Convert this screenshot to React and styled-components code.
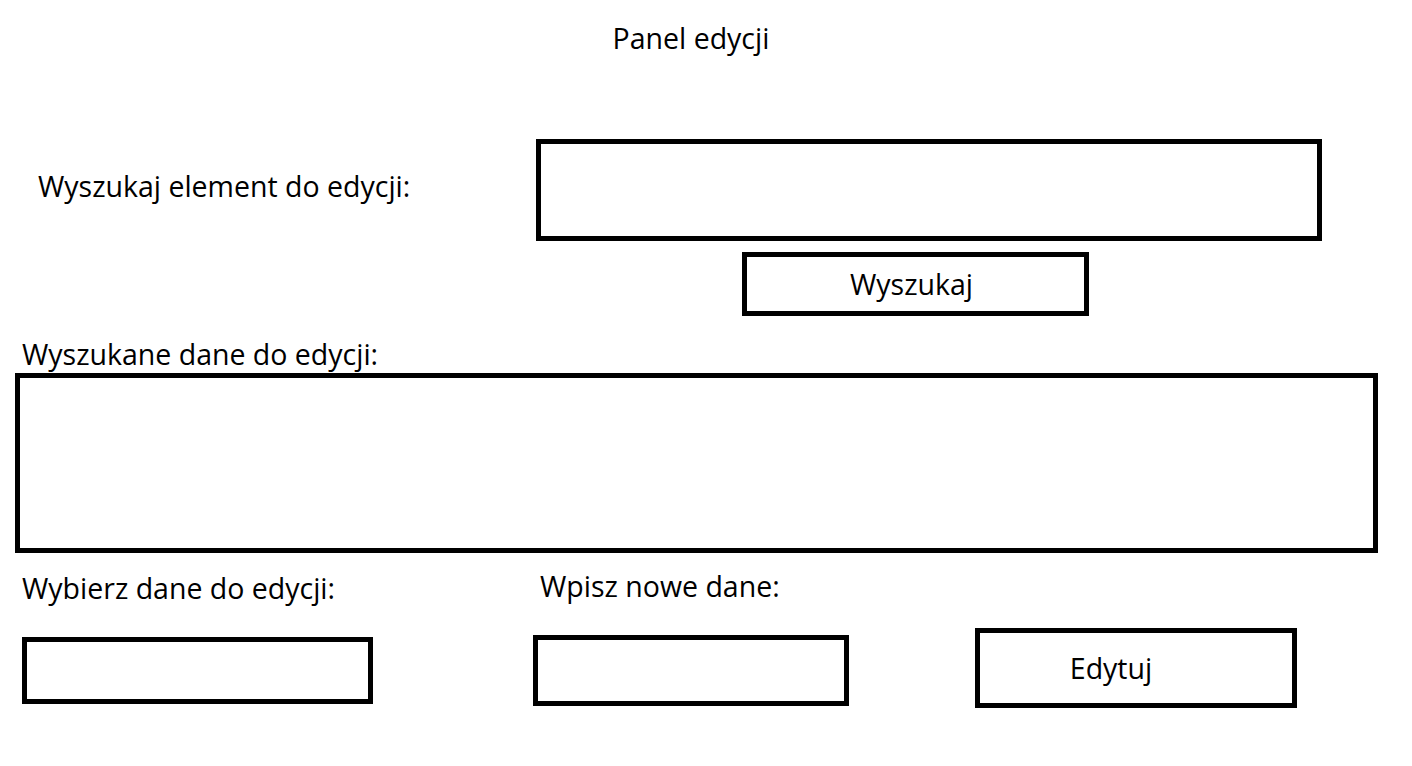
import React from "react";
import styled, { createGlobalStyle } from "styled-components";

const GlobalStyle = createGlobalStyle`
  html, body {
    margin: 0;
    padding: 0;
    background: #fff;
  }
  body {
    font-family: "Open Sans", "Noto Sans", sans-serif;
    color: #000;
  }
`;

const App = () => {
  return (
    <StPage>
      <GlobalStyle />
      <StTitle>Panel edycji</StTitle>

      <StSearchRow>
        <StLabel $indent={38}>Wyszukaj element do edycji:</StLabel>
        <StBox $w={786} $h={102} />
      </StSearchRow>

      <StButtonRow>
        <StButton $w={347} $h={64}>Wyszukaj</StButton>
      </StButtonRow>

      <StResultsLabel>Wyszukane dane do edycji:</StResultsLabel>
      <StResults />

      <StEditGrid>
        <StLabel $indent={22}>Wybierz dane do edycji:</StLabel>
        <StLabel $indent={7} $lift={2}>Wpisz nowe dane:</StLabel>
        <div />
        <StCell $indent={22} $top={9}>
          <StBox $w={351} $h={67} />
        </StCell>
        <StCell $top={7}>
          <StBox $w={316} $h={71} />
        </StCell>
        <StCell>
          <StButton $w={322} $h={80} $shift={50}>
            Edytuj
          </StButton>
        </StCell>
      </StEditGrid>
    </StPage>
  );
};

export default App;

const StPage = styled.main`
  width: 1412px;
  height: 766px;
  display: flex;
  flex-direction: column;
  box-sizing: border-box;
`;

const StTitle = styled.h1`
  margin: 21px 0 0;
  padding-right: 30px;
  text-align: center;
  font-size: 28.5px;
  font-weight: 400;
  line-height: 34px;
`;

const StLabel = styled.div`
  padding-left: ${(p) => p.$indent || 0}px;
  margin-top: ${(p) => -(p.$lift || 0)}px;
  font-size: 28.5px;
  line-height: 34px;
  white-space: nowrap;
`;

const StBox = styled.div`
  box-sizing: border-box;
  width: ${(p) => p.$w}px;
  height: ${(p) => p.$h}px;
  border: 5px solid #000;
  background: #fff;
`;

const StSearchRow = styled.div`
  margin-top: 84px;
  display: grid;
  grid-template-columns: 536px auto;
  align-items: center;

  ${StLabel} {
    padding-bottom: 8px;
  }
`;

const StButtonRow = styled.div`
  margin-top: 11px;
  padding-left: 742px;
`;

const StButton = styled.button`
  box-sizing: border-box;
  width: ${(p) => p.$w}px;
  height: ${(p) => p.$h}px;
  border: 5px solid #000;
  background: #fff;
  padding: 0 ${(p) => p.$shift || 8}px 0 0;
  display: flex;
  align-items: center;
  justify-content: center;
  font-family: inherit;
  font-size: 28.5px;
  color: #000;
  cursor: pointer;
`;

const StResultsLabel = styled.div`
  margin-top: 21px;
  padding-left: 22px;
  font-size: 28.5px;
  line-height: 34px;
`;

const StResults = styled.div`
  box-sizing: border-box;
  margin: 2px 0 0 15px;
  width: 1363px;
  height: 180px;
  border: 5px solid #000;
`;

const StEditGrid = styled.div`
  margin-top: 18px;
  display: grid;
  grid-template-columns: 533px 442px auto;
  grid-template-rows: 34px 80px;
  row-gap: 23px;
  align-items: start;
`;

const StCell = styled.div`
  padding: ${(p) => p.$top || 0}px 0 0 ${(p) => p.$indent || 0}px;
  display: flex;
`;
